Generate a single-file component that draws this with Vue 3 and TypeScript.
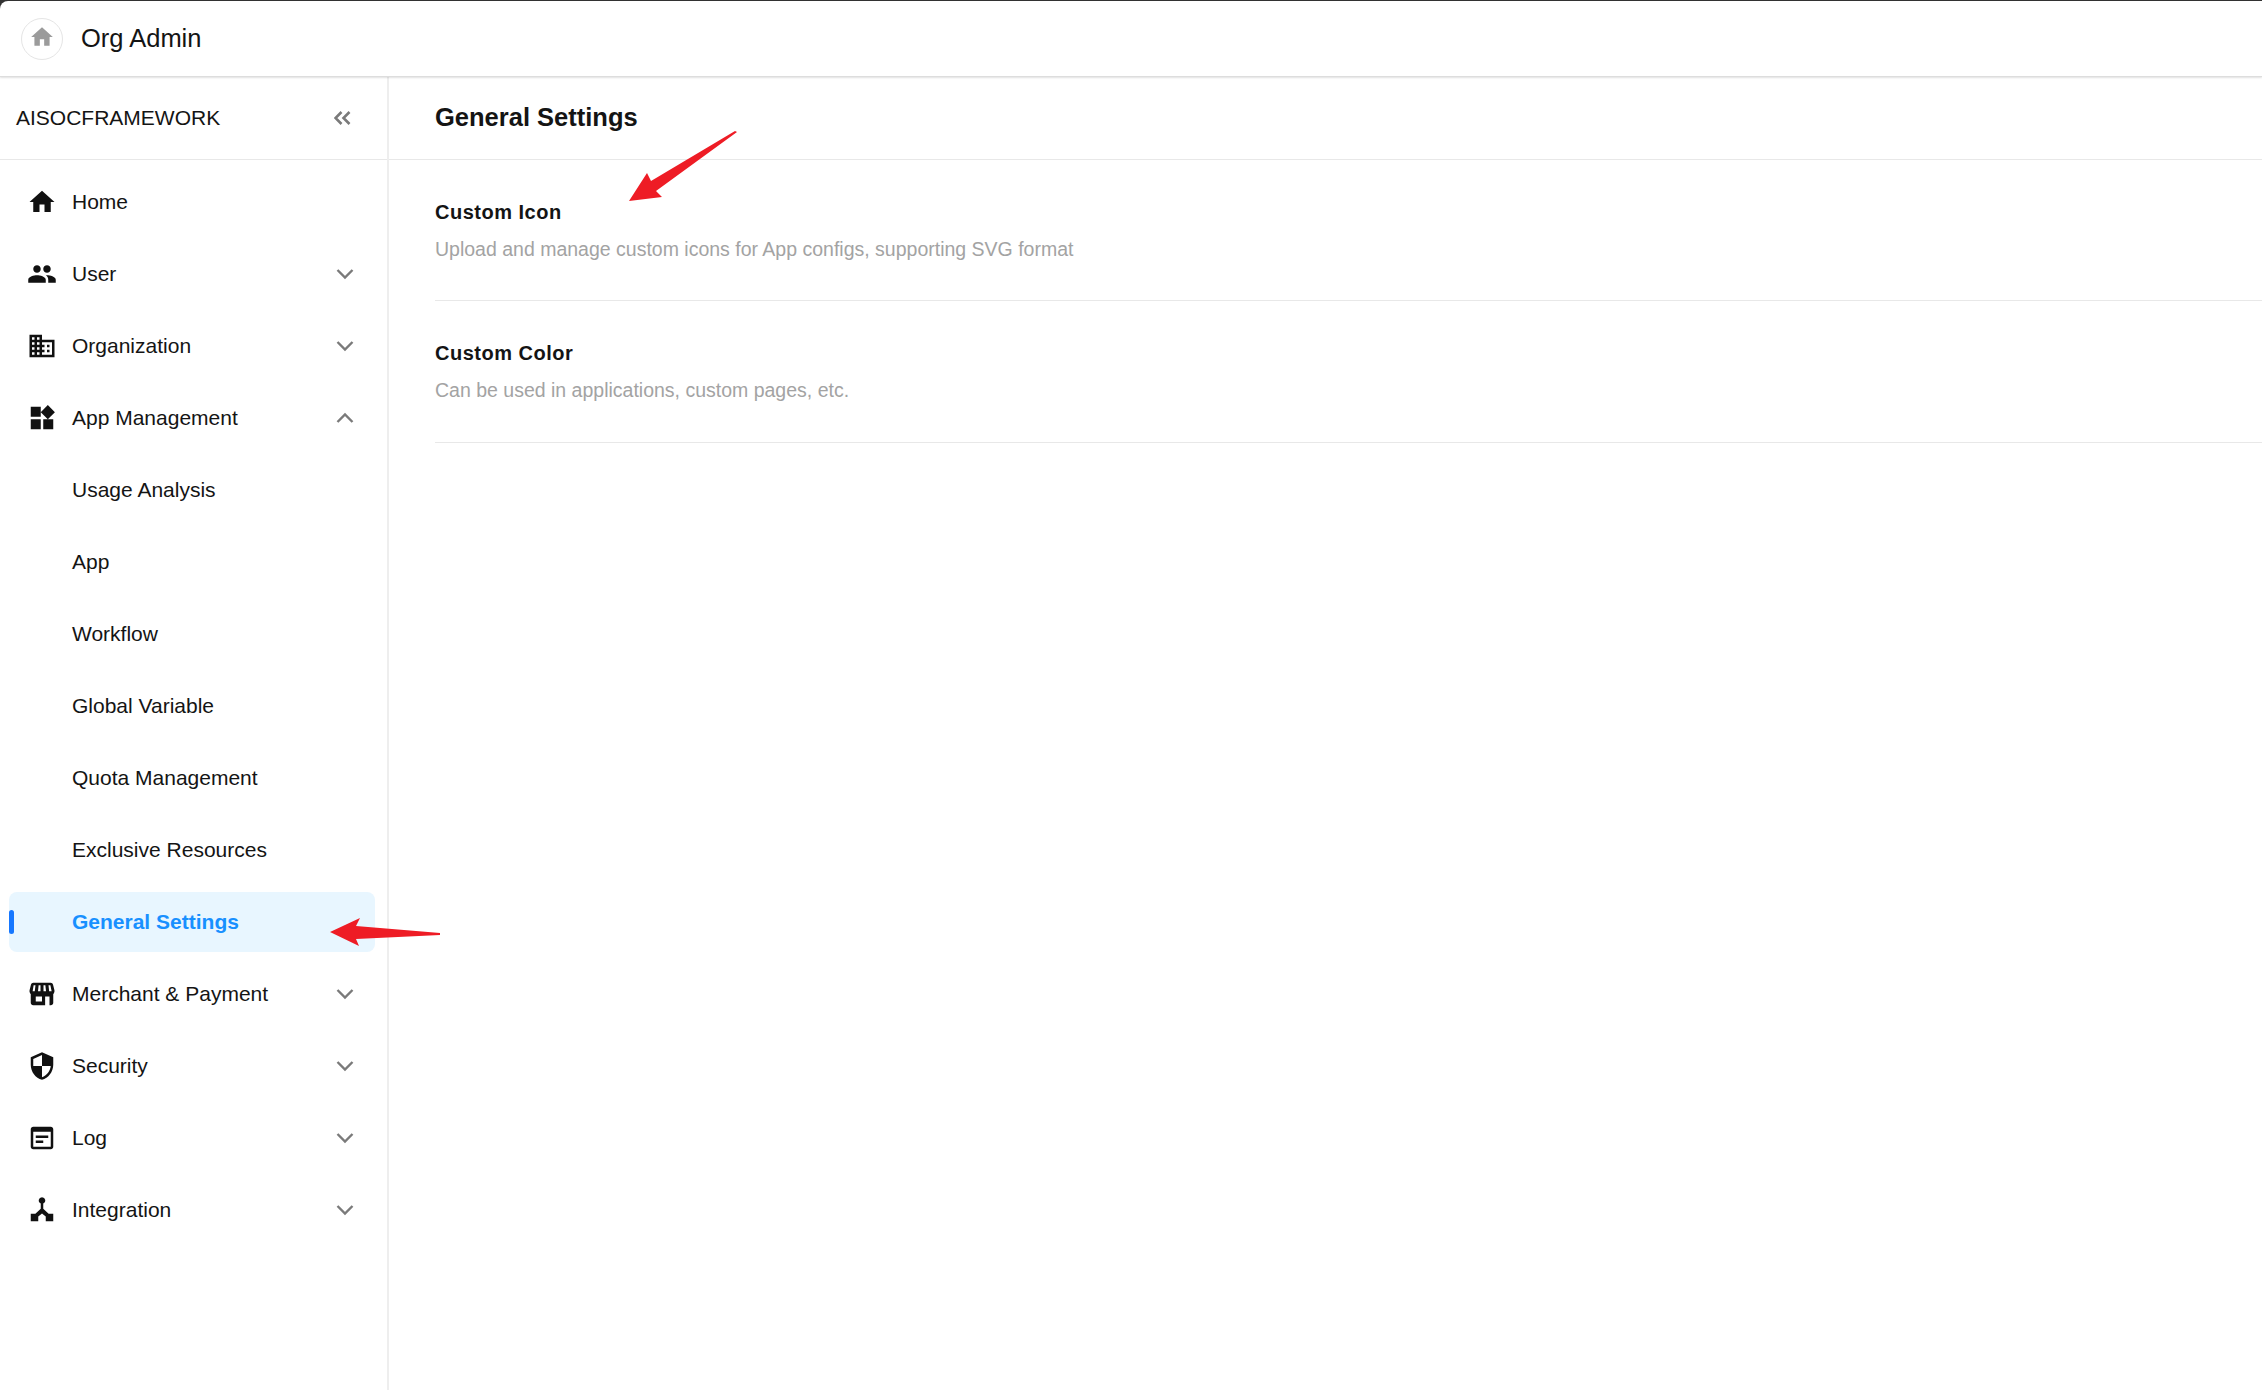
<script setup lang="ts">
interface Item {
  label: string
  icon?: string
  chevron?: 'down' | 'up'
  active?: boolean
}

const icons: Record<string, string> = {
  home: 'M10 20v-6h4v6h5v-8h3L12 3 2 12h3v8z',
  user: 'M16 11c1.66 0 2.99-1.34 2.99-3S17.66 5 16 5c-1.66 0-3 1.34-3 3s1.34 3 3 3zm-8 0c1.66 0 2.99-1.34 2.99-3S9.66 5 8 5C6.34 5 5 6.34 5 8s1.34 3 3 3zm0 2c-2.33 0-7 1.17-7 3.5V19h14v-2.5c0-2.33-4.67-3.5-7-3.5zm8 0c-.29 0-.62.02-.97.05 1.16.84 1.97 1.97 1.97 3.45V19h6v-2.5c0-2.33-4.67-3.5-7-3.5z',
  org: 'M12 7V3H2v18h20V7H12zM6 19H4v-2h2v2zm0-4H4v-2h2v2zm0-4H4V9h2v2zm0-4H4V5h2v2zm4 12H8v-2h2v2zm0-4H8v-2h2v2zm0-4H8V9h2v2zm0-4H8V5h2v2zm10 12h-8v-2h2v-2h-2v-2h2v-2h-2V9h8v10zm-2-8h-2v2h2v-2zm0 4h-2v2h2v-2z',
  app: 'M13 13v8h8v-8h-8zM3 21h8v-8H3v8zM3 3v8h8V3H3zm13.66-1.31L11 7.34 16.66 13l5.66-5.66-5.66-5.65z',
  store: 'M21.9 8.89l-1.05-4.37c-.22-.9-1-1.52-1.91-1.52H5.05c-.9 0-1.69.63-1.9 1.52L2.1 8.89c-.24 1.02-.02 2.06.62 2.88.08.11.19.19.28.29V19c0 1.1.9 2 2 2h14c1.1 0 2-.9 2-2v-6.94c.09-.09.2-.18.28-.28.64-.82.87-1.87.62-2.89zM13.200 5h1.500l.5 4.800h-2zM9.300 5h1.500v4.800h-2zM5.300 5h1.500l-.6 4.800H4.500zM17.200 5h1.500l1 4.800h-2zM7 14h5v4H7zM14.500 14H18v7h-3.500z',
  security: 'M12 1L3 5v6c0 5.55 3.84 10.74 9 12 5.16-1.26 9-6.45 9-12V5l-9-4zm0 10.99h7c-.53 4.12-3.28 7.79-7 8.94V12H5V6.3l7-3.11v8.8z',
  log: 'M19 3H5c-1.1 0-2 .9-2 2v14c0 1.1.9 2 2 2h14c1.1 0 2-.9 2-2V5c0-1.1-.9-2-2-2zm0 16H5V7h14v12zM7 10h10v2H7zm0 4h6v2H7z',
  hub: 'M12 1.800a2.600 2.600 0 0 1 1 5l0 4.100 4.300 4.100H21v6h-6v-3.800L12 14.700l-3 2.500V21H3v-6h3.700L11 10.900V6.800a2.600 2.600 0 0 1 1-5z',
}

const items: Item[] = [
  { label: 'Home', icon: 'home' },
  { label: 'User', icon: 'user', chevron: 'down' },
  { label: 'Organization', icon: 'org', chevron: 'down' },
  { label: 'App Management', icon: 'app', chevron: 'up' },
  { label: 'Usage Analysis' },
  { label: 'App' },
  { label: 'Workflow' },
  { label: 'Global Variable' },
  { label: 'Quota Management' },
  { label: 'Exclusive Resources' },
  { label: 'General Settings', active: true },
  { label: 'Merchant & Payment', icon: 'store', chevron: 'down' },
  { label: 'Security', icon: 'security', chevron: 'down' },
  { label: 'Log', icon: 'log', chevron: 'down' },
  { label: 'Integration', icon: 'hub', chevron: 'down' },
]

const sections = [
  { title: 'Custom Icon', desc: 'Upload and manage custom icons for App configs, supporting SVG format' },
  { title: 'Custom Color', desc: 'Can be used in applications, custom pages, etc.' },
]
</script>

<template>
  <div class="page">
    <header class="topbar">
      <span class="home-btn">
        <svg viewBox="0 0 24 24" class="home-icon"><path :d="icons.home" /></svg>
      </span>
      <span class="org">Org Admin</span>
    </header>
    <div class="body">
      <aside class="sidebar">
        <div class="brand">
          <span>AISOCFRAMEWORK</span>
          <svg viewBox="0 0 18 14" class="collapse">
            <path d="M7.500 1 1.500 7l6 6M15.500 1 9.500 7l6 6" />
          </svg>
        </div>
        <nav class="menu">
          <div v-for="item in items" :key="item.label" class="row" :class="{ active: item.active }">
            <svg v-if="item.icon" viewBox="0 0 24 24" class="icon"><path fill-rule="evenodd" :d="icons[item.icon]" /></svg>
            <span class="label" :class="{ sub: !item.icon }">{{ item.label }}</span>
            <svg v-if="item.chevron" viewBox="0 0 18 12" class="chev" :class="{ up: item.chevron === 'up' }">
              <path d="M1.500 2 9 9.500 16.500 2" />
            </svg>
          </div>
        </nav>
      </aside>
      <main class="main">
        <h1 class="title">General Settings</h1>
        <div class="sections">
          <section v-for="s in sections" :key="s.title" class="section">
            <div class="sec-title">{{ s.title }}</div>
            <div class="sec-desc">{{ s.desc }}</div>
          </section>
        </div>
      </main>
    </div>
    <svg class="arrows" viewBox="0 0 2262 1390">
      <polygon points="629,201 647,173 651,181 735,131 737,132 656,191 662,197" />
      <polygon points="330,932 360,918 356,926 440,933 440,935 356,939 359,946" />
    </svg>
  </div>
</template>

<style>
html,
body {
  margin: 0;
  background: #fff;
}
</style>

<style scoped>
.page {
  position: relative;
  height: 1390px;
  display: flex;
  flex-direction: column;
  overflow: hidden;
  background: #333;
  font-family: "Liberation Sans", Arial, sans-serif;
  color: #141414;
  padding-top: 1px;
  box-sizing: border-box;
}
.topbar {
  height: 76px;
  flex: none;
  display: flex;
  align-items: center;
  padding-left: 21px;
  background: #fff;
  border-top-left-radius: 8px;
  box-sizing: border-box;
  border-bottom: 1px solid #ddd;
  box-shadow: 0 1px 2px rgba(0, 0, 0, 0.12);
  position: relative;
  z-index: 1;
}
.home-btn {
  width: 42px;
  height: 42px;
  border: 1px solid #e5e5e5;
  border-radius: 50%;
  box-sizing: border-box;
  display: flex;
  align-items: center;
  justify-content: center;
}
.home-icon {
  width: 26px;
  height: 26px;
  fill: #9b9b9b;
  margin-bottom: 4px;
}
.org {
  margin-left: 18px;
  font-size: 25.500px;
}
.body {
  flex: 1;
  display: flex;
  background: #fff;
  min-height: 0;
}
.sidebar {
  width: 389px;
  flex: none;
  box-sizing: border-box;
  border-right: 2px solid #eeeeee;
}
.brand {
  height: 83px;
  box-sizing: border-box;
  border-bottom: 1px solid #e8e8e8;
  display: flex;
  align-items: center;
  justify-content: space-between;
  padding: 0 35px 0 16px;
  font-size: 21px;
}
.collapse {
  width: 18px;
  height: 14px;
  fill: none;
  stroke: #7a7a7a;
  stroke-width: 2.600;
}
.menu {
  display: flex;
  flex-direction: column;
  gap: 12px;
  padding: 12px 12px 0 9px;
}
.row {
  height: 60px;
  position: relative;
  display: flex;
  align-items: center;
  padding-left: 18px;
  padding-right: 21px;
  border-radius: 8px;
  font-size: 21px;
}
.icon {
  width: 30px;
  height: 30px;
  fill: #111;
  flex: none;
  margin-right: 15px;
}
.label.sub {
  margin-left: 45px;
}
.chev {
  margin-left: auto;
  width: 18px;
  height: 12px;
  fill: none;
  stroke: #7a7a7a;
  stroke-width: 2.400;
}
.chev.up {
  transform: rotate(180deg);
}
.row.active {
  background: #e8f6ff;
  color: #1890ff;
  font-weight: 700;
}
.row.active::before {
  content: "";
  position: absolute;
  left: 0;
  top: 18px;
  width: 5px;
  height: 24px;
  border-radius: 3px;
  background: #1677ff;
}
.main {
  flex: 1;
  min-width: 0;
}
.title {
  margin: 0;
  height: 83px;
  box-sizing: border-box;
  border-bottom: 1px solid #e8e8e8;
  padding: 0 0 2px 46px;
  display: flex;
  align-items: center;
  font-size: 25.500px;
  font-weight: 700;
}
.sections {
  padding-left: 46px;
}
.section {
  height: 141px;
  box-sizing: border-box;
  border-bottom: 1px solid #e8e8e8;
  padding-top: 39px;
}
.section:last-child {
  height: 142px;
}
.sec-title {
  font-size: 20px;
  font-weight: 700;
  line-height: 26px;
  letter-spacing: 0.500px;
}
.sec-desc {
  margin-top: 11px;
  font-size: 19.500px;
  line-height: 26px;
  color: #a3a3a3;
}
.arrows {
  position: absolute;
  inset: 0;
  width: 2262px;
  height: 1390px;
  pointer-events: none;
  z-index: 2;
}
.arrows polygon {
  fill: #ee1c25;
}
</style>
